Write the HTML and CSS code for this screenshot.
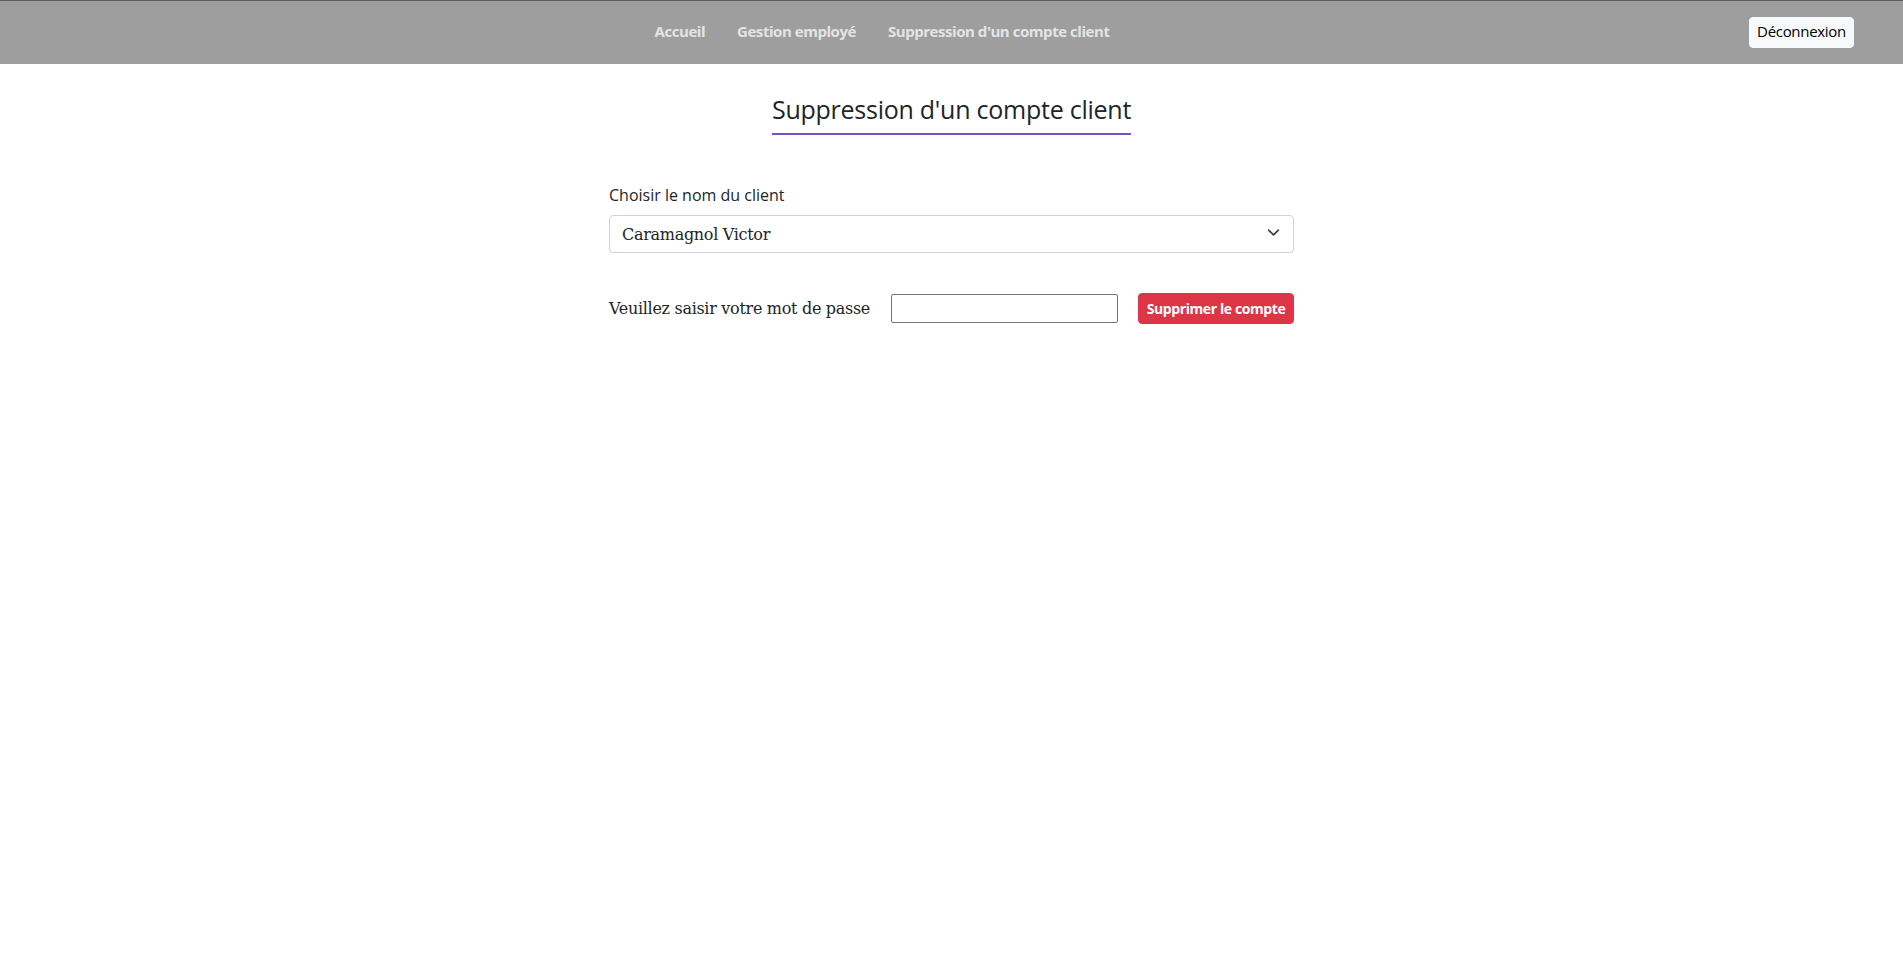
FILE: index.html
```html
<!DOCTYPE html>
<html lang="fr">
<head>
<meta charset="utf-8">
<title>Suppression d'un compte client</title>
<link rel="stylesheet" href="styles.css">
</head>
<body>
<header class="navbar">
  <nav class="nav">
    <a class="nav-link" href="#">Accueil</a>
    <a class="nav-link" href="#">Gestion employé</a>
    <a class="nav-link" href="#">Suppression d'un compte client</a>
  </nav>
  <button class="btn-logout" type="button">Déconnexion</button>
</header>
<main class="page">
  <div class="title-wrap">
    <h1 class="title">Suppression d'un compte client</h1>
  </div>
  <form class="form">
    <label class="form-label" for="client">Choisir le nom du client</label>
    <div class="select-wrap">
      <select class="form-select" id="client">
        <option>Caramagnol Victor</option>
      </select>
      <svg class="chevron" viewBox="0 0 16 16" width="16" height="16" aria-hidden="true"><path d="M2 5l6 6 6-6" fill="none" stroke="#343a40" stroke-width="2" stroke-linecap="round" stroke-linejoin="round"/></svg>
    </div>
    <div class="pwd-row">
      <label class="pwd-label" for="pwd">Veuillez saisir votre mot de passe</label>
      <input class="pwd-input" id="pwd" type="password">
      <button class="btn-danger" type="button">Supprimer le compte</button>
    </div>
  </form>
</main>
</body>
</html>
```

FILE: styles.css
```css
* { box-sizing: border-box; }
html, body { margin: 0; padding: 0; background: #fff; }
body {
  font-family: "Open Sans", "Noto Sans", sans-serif;
  color: #212529;
}
.navbar {
  display: flex;
  align-items: center;
  height: 64px;
  background: #9e9e9e;
  border-top: 1px solid #5e5e5e;
  padding: 0 49px 0 29px;
}
.nav {
  flex: 1;
  display: flex;
  justify-content: center;
  padding-bottom: 3px;
}
.nav-link {
  color: #e4e4e4;
  text-decoration: none;
  font-weight: 700;
  font-size: 15px;
  padding: 0 16px;
  letter-spacing: -0.45px;
}
.btn-logout {
  margin-left: 14px;
  margin-bottom: 1px;
  width: 105px;
  height: 31px;
  background: #f8f9fa;
  border: 1px solid #f8f9fa;
  border-radius: 4px;
  color: #000;
  font-family: "Open Sans", sans-serif;
  font-size: 15px;
  line-height: 27px;
  padding: 0 0 2px;
  letter-spacing: -0.3px;
}
.title-wrap { text-align: center; padding-top: 27px; }
.title {
  display: inline-block;
  margin: 0;
  font-size: 25px;
  font-weight: 400;
  line-height: 37px;
  color: #212529;
  border-bottom: 2px solid #7b4fc4;
  padding-bottom: 5px;
  letter-spacing: -0.25px;
}
.form {
  width: 685px;
  margin: 48px auto 0;
}
.form-label {
  display: block;
  font-size: 16px;
  line-height: 24px;
  margin-bottom: 8px;
  letter-spacing: 0;
}
.select-wrap { position: relative; }
.form-select {
  display: block;
  width: 100%;
  height: 38px;
  -webkit-appearance: none;
  appearance: none;
  border: 1px solid #ced4da;
  border-radius: 4px;
  background: #fff;
  padding: 0 36px 0 12px;
  font-family: "DejaVu Serif", serif;
  font-size: 16px;
  letter-spacing: -0.3px;
  color: #212529;
}
.chevron {
  position: absolute;
  right: 14px;
  top: 11px;
  width: 13px;
  height: 13px;
  pointer-events: none;
}
.pwd-row {
  display: flex;
  align-items: center;
  justify-content: space-between;
  margin-top: 40px;
}
.pwd-label {
  font-family: "DejaVu Serif", serif;
  font-size: 16px;
  letter-spacing: -0.3px;
  color: #212529;
}
.pwd-input {
  width: 227px;
  height: 29px;
  border: 1px solid #767676;
  border-radius: 2px;
  padding: 1px 2px;
}
.btn-danger {
  width: 156px;
  height: 31px;
  background: #dc3545;
  border: 1px solid #dc3545;
  border-radius: 4px;
  color: #fff;
  font-family: "Open Sans", sans-serif;
  font-weight: 700;
  font-size: 14px;
  padding: 0;
  letter-spacing: -0.4px;
}
```
